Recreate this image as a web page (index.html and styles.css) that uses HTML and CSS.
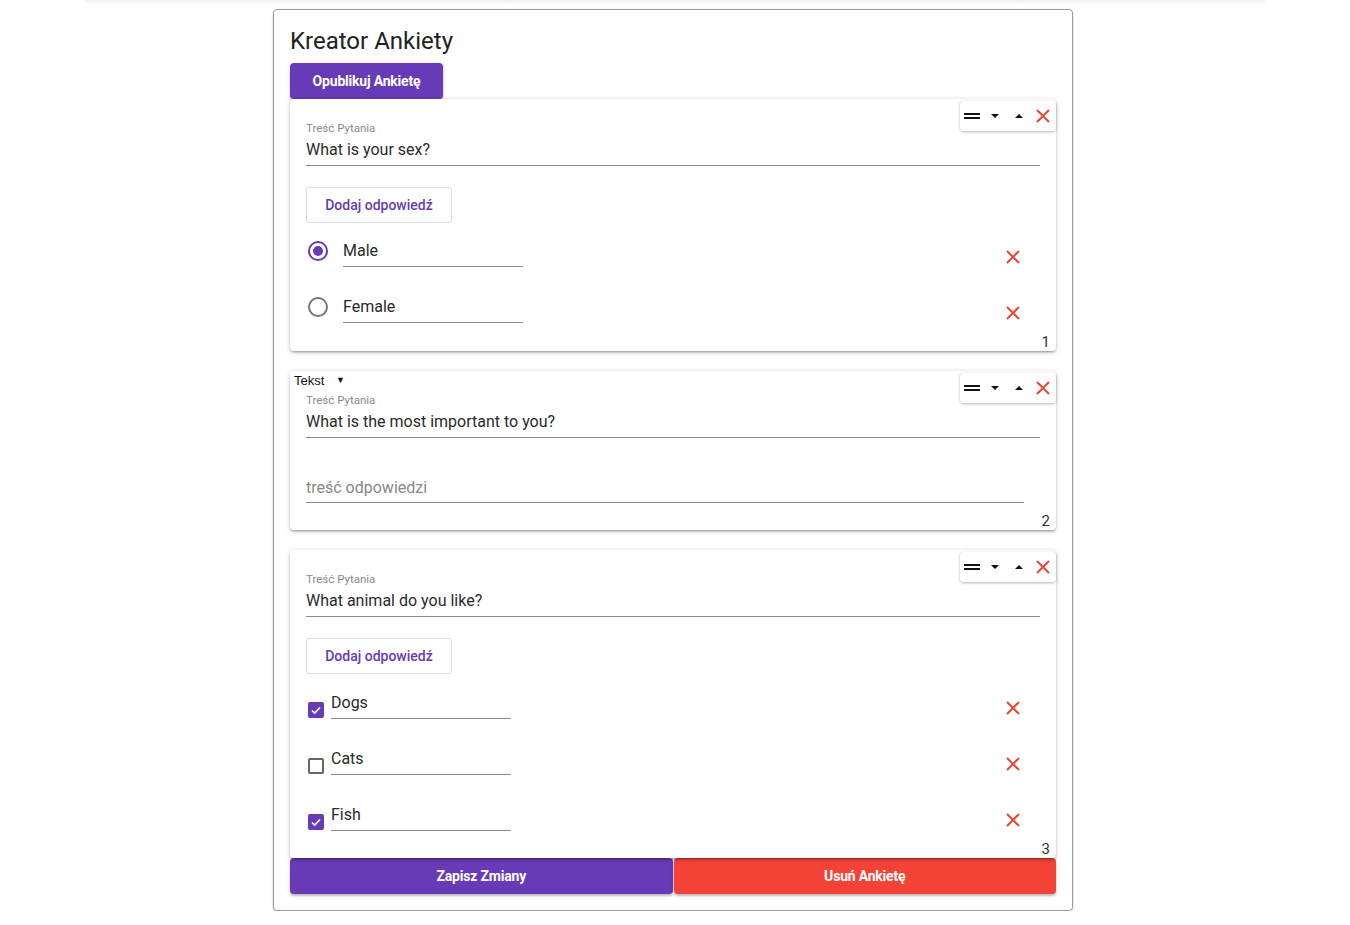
FILE: index.html
```html
<!DOCTYPE html>
<html lang="pl">
<head>
<meta charset="utf-8">
<title>Kreator Ankiety</title>
<link rel="stylesheet" href="styles.css">
</head>
<body>
<div class="topbar"></div>
<div class="creator">
  <h1 class="title">Kreator Ankiety</h1>
  <button class="btn btn-primary btn-publish">Opublikuj Ankietę</button>

  <div class="card">
    <div class="card-top"></div>
    <div class="toolbar">
      <svg class="tb-icon" width="16" height="8" viewBox="0 0 16 8"><rect x="0" y="1" width="16" height="2" fill="#111"/><rect x="0" y="5" width="16" height="2" fill="#111"/></svg>
      <svg class="tb-icon" width="10" height="6" viewBox="0 0 10 6"><path d="M1 1h8l-4 4z" fill="#111"/></svg>
      <svg class="tb-icon" width="10" height="6" viewBox="0 0 10 6"><path d="M1 5h8l-4-4z" fill="#111"/></svg>
      <svg class="tb-icon" width="16" height="16" viewBox="0 0 16 16"><path d="M2 2l12 12M14 2L2 14" stroke="#f44336" stroke-width="2"/></svg>
    </div>
    <div class="field">
      <div class="field-label">Treść Pytania</div>
      <div class="field-input">What is your sex?</div>
    </div>
    <button class="btn-outline">Dodaj odpowiedź</button>
    <div class="option">
      <span class="radio checked"></span>
      <div class="opt-input radio-input">Male</div>
      <svg class="remove" width="16" height="16" viewBox="0 0 16 16"><path d="M2 2l12 12M14 2L2 14" stroke="#f44336" stroke-width="2"/></svg>
    </div>
    <div class="option">
      <span class="radio"></span>
      <div class="opt-input radio-input">Female</div>
      <svg class="remove" width="16" height="16" viewBox="0 0 16 16"><path d="M2 2l12 12M14 2L2 14" stroke="#f44336" stroke-width="2"/></svg>
    </div>
    <div class="num">1</div>
  </div>

  <div class="card">
    <div class="card-top"><span class="type-select">Tekst <span class="caret">▼</span></span></div>
    <div class="toolbar">
      <svg class="tb-icon" width="16" height="8" viewBox="0 0 16 8"><rect x="0" y="1" width="16" height="2" fill="#111"/><rect x="0" y="5" width="16" height="2" fill="#111"/></svg>
      <svg class="tb-icon" width="10" height="6" viewBox="0 0 10 6"><path d="M1 1h8l-4 4z" fill="#111"/></svg>
      <svg class="tb-icon" width="10" height="6" viewBox="0 0 10 6"><path d="M1 5h8l-4-4z" fill="#111"/></svg>
      <svg class="tb-icon" width="16" height="16" viewBox="0 0 16 16"><path d="M2 2l12 12M14 2L2 14" stroke="#f44336" stroke-width="2"/></svg>
    </div>
    <div class="field">
      <div class="field-label">Treść Pytania</div>
      <div class="field-input">What is the most important to you?</div>
    </div>
    <div class="answer-input">treść odpowiedzi</div>
    <div class="num num-text">2</div>
  </div>

  <div class="card card-last">
    <div class="card-top"></div>
    <div class="toolbar">
      <svg class="tb-icon" width="16" height="8" viewBox="0 0 16 8"><rect x="0" y="1" width="16" height="2" fill="#111"/><rect x="0" y="5" width="16" height="2" fill="#111"/></svg>
      <svg class="tb-icon" width="10" height="6" viewBox="0 0 10 6"><path d="M1 1h8l-4 4z" fill="#111"/></svg>
      <svg class="tb-icon" width="10" height="6" viewBox="0 0 10 6"><path d="M1 5h8l-4-4z" fill="#111"/></svg>
      <svg class="tb-icon" width="16" height="16" viewBox="0 0 16 16"><path d="M2 2l12 12M14 2L2 14" stroke="#f44336" stroke-width="2"/></svg>
    </div>
    <div class="field">
      <div class="field-label">Treść Pytania</div>
      <div class="field-input">What animal do you like?</div>
    </div>
    <button class="btn-outline">Dodaj odpowiedź</button>
    <div class="option">
      <span class="checkbox checked"><svg width="12" height="12" viewBox="0 0 12 12"><path d="M2 6.5l2.6 2.6L10 3.5" stroke="#fff" stroke-width="1.6" fill="none"/></svg></span>
      <div class="opt-input check-input">Dogs</div>
      <svg class="remove" width="16" height="16" viewBox="0 0 16 16"><path d="M2 2l12 12M14 2L2 14" stroke="#f44336" stroke-width="2"/></svg>
    </div>
    <div class="option">
      <span class="checkbox"></span>
      <div class="opt-input check-input">Cats</div>
      <svg class="remove" width="16" height="16" viewBox="0 0 16 16"><path d="M2 2l12 12M14 2L2 14" stroke="#f44336" stroke-width="2"/></svg>
    </div>
    <div class="option">
      <span class="checkbox checked"><svg width="12" height="12" viewBox="0 0 12 12"><path d="M2 6.5l2.6 2.6L10 3.5" stroke="#fff" stroke-width="1.6" fill="none"/></svg></span>
      <div class="opt-input check-input">Fish</div>
      <svg class="remove" width="16" height="16" viewBox="0 0 16 16"><path d="M2 2l12 12M14 2L2 14" stroke="#f44336" stroke-width="2"/></svg>
    </div>
    <div class="num">3</div>
  </div>

  <div class="actions">
    <button class="btn btn-primary btn-action">Zapisz Zmiany</button>
    <button class="btn btn-danger btn-action">Usuń Ankietę</button>
  </div>
</div>
</body>
</html>
```
FILE: styles.css
```css
* { box-sizing: border-box; }
html, body { margin: 0; padding: 0; background: #fff; }
body {
  font-family: Roboto, "Liberation Sans", sans-serif;
  color: #212121;
}
.topbar {
  width: 1180px;
  height: 4px;
  margin: 0 auto 0 85px;
  background: linear-gradient(#f0f0f0, #fbfbfb);
}
.creator {
  width: 800px;
  margin: 5px 0 0 273px;
  padding: 16px;
  border: 1px solid #999;
  border-radius: 4px;
  box-shadow: 0 1px 2px rgba(0,0,0,0.25);
}
.title {
  margin: 0;
  font-size: 24px;
  font-weight: 400;
  line-height: 30px;
  color: #222;
}
.btn {
  border: none;
  border-radius: 4px;
  color: #fff;
  font-family: Roboto, "Liberation Sans", sans-serif;
  font-weight: 700;
  font-size: 14px;
  letter-spacing: -0.2px;
  height: 36px;
  cursor: pointer;
  box-shadow: 0 2px 2px rgba(0,0,0,0.2), 0 1px 5px rgba(0,0,0,0.12);
}
.btn-primary { background: #673ab7; }
.btn-danger { background: #f44336; }
.btn-publish {
  display: block;
  margin-top: 7px;
  width: 153px;
  padding: 0;
}
.card {
  position: relative;
  background: #fff;
  border-radius: 4px;
  padding: 0 16px;
  margin-bottom: 20px;
  box-shadow: 0 2px 2px rgba(0,0,0,0.14), 0 3px 1px -2px rgba(0,0,0,0.12), 0 1px 5px rgba(0,0,0,0.2);
}
.card-last { margin-bottom: 0; }
.card-top {
  height: 22px;
  padding-top: 2px;
  margin-left: -12px;
}
.type-select {
  font-family: "Liberation Sans", Arial, sans-serif;
  font-size: 13px;
  line-height: 14px;
  color: #111;
  vertical-align: top;
}
.caret {
  font-size: 9px;
  margin-left: 8px;
  vertical-align: 2px;
}
.toolbar {
  position: absolute;
  top: 2px;
  right: 0;
  width: 96px;
  height: 30px;
  background: #fff;
  border-radius: 4px;
  box-shadow: 0 1px 3px rgba(0,0,0,0.3);
  display: flex;
  align-items: center;
  padding-left: 4px;
}
.tb-icon { display: block; flex: none; }
.tb-icon:nth-child(1) { margin-right: 10px; }
.tb-icon:nth-child(2) { margin-right: 14px; }
.tb-icon:nth-child(3) { margin-right: 11px; }
.field-label {
  font-size: 11.5px;
  line-height: 14px;
  color: #888;
}
.field-input {
  height: 31px;
  border-bottom: 1px solid #8a8a8a;
  font-size: 16px;
  line-height: 30px;
  color: #2a2a2a;
}
.btn-outline {
  display: block;
  margin-top: 21px;
  width: 146px;
  height: 36px;
  background: #fff;
  border: 1px solid #ddd;
  border-radius: 3px;
  color: #673ab7;
  font-family: Roboto, "Liberation Sans", sans-serif;
  font-weight: 500;
  font-size: 14px;
  padding: 0;
}
.option {
  height: 56px;
  display: flex;
  align-items: center;
}
.radio {
  flex: none;
  width: 20px;
  height: 20px;
  margin-left: 2px;
  border: 2px solid #757575;
  border-radius: 50%;
  position: relative;
}
.radio.checked { border-color: #673ab7; }
.radio.checked::after {
  content: "";
  position: absolute;
  left: 3px;
  top: 3px;
  width: 10px;
  height: 10px;
  border-radius: 50%;
  background: #673ab7;
}
.opt-input {
  width: 180px;
  height: 31px;
  border-bottom: 1px solid #8a8a8a;
  font-size: 16px;
  line-height: 29px;
  color: #2a2a2a;
  margin-top: 1px;
}
.radio-input { margin-left: 15px; }
.checkbox {
  flex: none;
  width: 16px;
  height: 16px;
  margin-left: 2px;
  margin-top: 16px;
  border: 2px solid #666;
  border-radius: 2px;
  display: flex;
  align-items: center;
  justify-content: center;
}
.checkbox.checked { background: #673ab7; border-color: #673ab7; }
.checkbox svg { display: block; }
.check-input { margin-left: 7px; margin-top: 3px; }
.remove {
  flex: none;
  margin-left: auto;
  margin-right: 19px;
  margin-top: 12px;
}
.answer-input {
  margin-top: 35px;
  width: 718px;
  height: 30px;
  border-bottom: 1px solid #8a8a8a;
  font-size: 16px;
  line-height: 29px;
  color: #888;
}
.num {
  text-align: right;
  margin-right: -10px;
  font-size: 15px;
  line-height: 14px;
  height: 16px;
  padding-bottom: 2px;
  color: #333;
}
.num-text { margin-top: 11px; }
.actions {
  display: flex;
  gap: 1px;
}
.btn-action { flex: 1; }
```
